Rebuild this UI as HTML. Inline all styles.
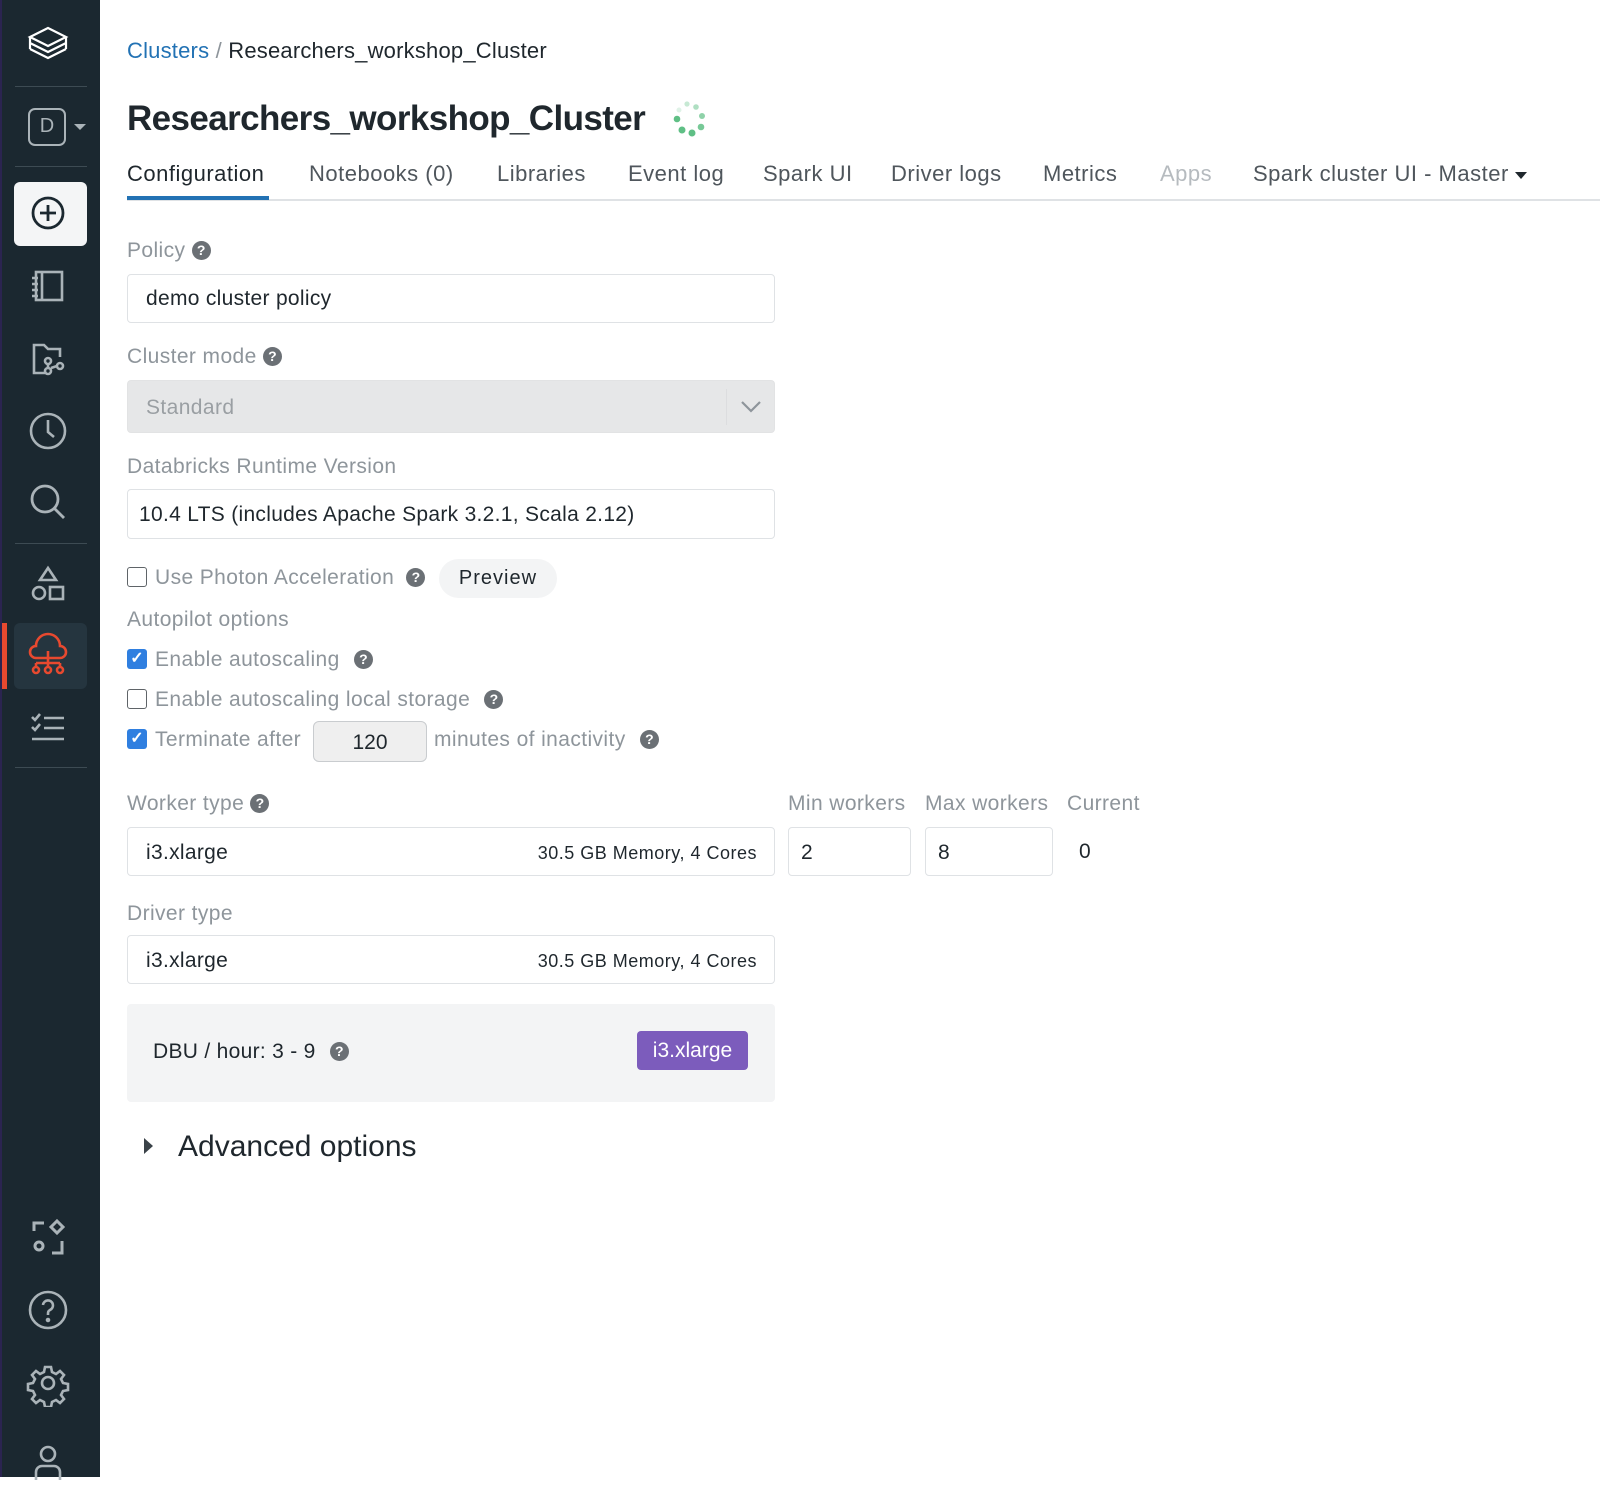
<!DOCTYPE html>
<html><head><meta charset="utf-8"><style>
*{box-sizing:border-box;margin:0;padding:0}
body{width:1600px;height:1477px;background:#fff;font-family:"Liberation Sans",sans-serif;position:relative;overflow:hidden;color:#1f272d}
.sb{position:absolute;left:0;top:0;width:100px;height:1477px;background:#1b2830}
.sb .edge{position:absolute;left:0;top:0;width:2px;height:1477px;background:#2b2450}
.sep{position:absolute;left:15px;width:72px;height:1px;background:#3d4b53}
.ic{position:absolute;left:24px;width:48px;height:48px}
.a{position:absolute;white-space:nowrap}
.lbl{color:#8e959b;font-size:21px;letter-spacing:.4px}
.inp{position:absolute;border:1px solid #dfe2e5;border-radius:4px;background:#fff}
.q{display:inline-block;width:19px;height:19px;border-radius:50%;background:#6b7075;color:#fff;font-size:14px;font-weight:bold;text-align:center;line-height:19px;vertical-align:2px;letter-spacing:0}
.cb{position:absolute;width:20px;height:20px;border:1.5px solid #5f6468;border-radius:3px;background:#fff}
.cbk{position:absolute;width:20px;height:20px;border-radius:3px;background:#2f7fe0;color:#fff;font-size:16px;text-align:center;line-height:20px;font-weight:bold}
.tab{position:absolute;top:161px;font-size:22px;color:#4f565c;letter-spacing:.5px}
</style></head><body>
<div class="sb"><div class="edge"></div>
<svg class="ic" style="top:21px" viewBox="0 0 48 48" fill="none" stroke="#fff" stroke-width="2.2"><path d="M6 16l18-9 18 9-18 9z"/><path d="M6 22l18 9 18-9M6 28l18 9 18-9M6 16v12M42 16v12"/></svg>
<div class="sep" style="top:86px"></div>
<div class="a" style="left:28px;top:108px;width:38px;height:38px;border:2.5px solid #aab3b8;border-radius:7px;color:#aab3b8;font-size:20px;text-align:center;line-height:33px">D</div>
<div class="a" style="left:74px;top:124px;border-left:6px solid transparent;border-right:6px solid transparent;border-top:6px solid #aab3b8"></div>
<div class="sep" style="top:166px"></div>
<div class="a" style="left:14px;top:182px;width:73px;height:64px;background:#f4f5f6;border-radius:6px"></div>
<svg class="ic" style="top:189px" viewBox="0 0 48 48" fill="none" stroke="#1b2830" stroke-width="2.8"><circle cx="24" cy="24" r="15"/><path d="M24 16v16M16 24h16"/></svg>
<svg class="ic" style="top:262px" viewBox="0 0 48 48" fill="none" stroke="#aab3b8" stroke-width="2.6"><rect x="12" y="10" width="26" height="28"/><path d="M18 10v28M8 16h6M8 22h6M8 28h6M8 34h6"/></svg>
<svg class="ic" style="top:335px" viewBox="0 0 48 48" fill="none" stroke="#aab3b8" stroke-width="2.6"><path d="M22 38H10V10h10l4 4h12v8"/><circle cx="24" cy="26" r="3"/><circle cx="24" cy="36" r="3"/><circle cx="36" cy="31" r="3"/><path d="M24 29v4M27 33l6-2"/></svg>
<svg class="ic" style="top:407px" viewBox="0 0 48 48" fill="none" stroke="#aab3b8" stroke-width="2.6"><circle cx="24" cy="24" r="17"/><path d="M24 13v12l6 5"/></svg>
<svg class="ic" style="top:478px" viewBox="0 0 48 48" fill="none" stroke="#aab3b8" stroke-width="2.8"><circle cx="21" cy="21" r="13"/><path d="M30 30l10 10"/></svg>
<div class="sep" style="top:543px"></div>
<svg class="ic" style="top:560px" viewBox="0 0 48 48" fill="none" stroke="#aab3b8" stroke-width="2.6"><path d="M24 8l8 12H16z"/><circle cx="15" cy="33" r="6"/><rect x="26" y="27" width="13" height="12"/></svg>
<div class="a" style="left:2px;top:623px;width:5px;height:66px;background:#e8492f"></div>
<div class="a" style="left:14px;top:623px;width:73px;height:66px;background:#25353f;border-radius:6px"></div>
<svg class="ic" style="top:631px" viewBox="0 0 48 48" fill="none" stroke="#e8492f" stroke-width="2.6"><path d="M12 27a6 6 0 010-12 10 10 0 0124 0 6 6 0 010 12z"/><path d="M24 20v12M12 32h24M12 32v5M36 32v5M24 32v5"/><circle cx="12" cy="39" r="3"/><circle cx="24" cy="39" r="3"/><circle cx="36" cy="39" r="3"/></svg>
<svg class="ic" style="top:703px" viewBox="0 0 48 48" fill="none" stroke="#aab3b8" stroke-width="2.6"><path d="M8 14l3 3 5-6M8 24l3 3 5-6M20 15h20M20 25h20M8 36h32"/></svg>
<div class="sep" style="top:767px"></div>
<svg class="ic" style="top:1213px" viewBox="0 0 48 48" fill="none" stroke="#aab3b8" stroke-width="3"><path d="M20 10H10v8"/><path d="M33 8l6 6-6 6-6-6z"/><circle cx="15" cy="33" r="4"/><path d="M38 28v12H28"/></svg>
<svg class="ic" style="top:1286px" viewBox="0 0 48 48" fill="none" stroke="#aab3b8" stroke-width="2.6"><circle cx="24" cy="24" r="18"/><path d="M19 19a5 5 0 1 1 7 5c-2 1-2 2-2 5"/><circle cx="24" cy="34" r="1" fill="#aab3b8"/></svg>
<svg class="ic" style="top:1359px" viewBox="0 0 48 48" fill="none" stroke="#aab3b8" stroke-width="2.6"><circle cx="24" cy="24" r="6"/><path d="M21 8h6l1 5 4 2 4-3 4 4-3 4 2 4 5 1v6l-5 1-2 4 3 4-4 4-4-3-4 2-1 5h-6l-1-5-4-2-4 3-4-4 3-4-2-4-5-1v-6l5-1 2-4-3-4 4-4 4 3 4-2z"/></svg>
<svg class="ic" style="top:1440px" viewBox="0 0 48 48" fill="none" stroke="#aab3b8" stroke-width="2.6"><circle cx="24" cy="14" r="7"/><path d="M12 40v-8a6 6 0 016-6h12a6 6 0 016 6v8"/></svg>
</div>

<div class="a" style="left:127px;top:38px;font-size:22px;letter-spacing:.2px"><span style="color:#2272b4">Clusters</span> <span style="color:#8e959b">/</span> Researchers_workshop_Cluster</div>
<div class="a" style="left:127px;top:99px;font-size:35px;font-weight:bold;color:#1f272d;letter-spacing:-.6px">Researchers_workshop_Cluster</div>
<svg class="a" style="left:668px;top:98px" width="44" height="44" viewBox="0 0 44 44"><g fill="#5fbf85"><circle cx="9" cy="21" r="3.3"/><circle cx="14" cy="32" r="3.5"/><circle cx="24" cy="35" r="3.5"/><circle cx="33" cy="29" r="3.3" opacity=".85"/><circle cx="34" cy="18" r="3" opacity=".7"/><circle cx="28" cy="9" r="2.8" opacity=".5"/><circle cx="19" cy="6" r="2.6" opacity=".35"/><circle cx="11" cy="12" r="2.5" opacity=".2"/></g></svg>

<div class="tab" style="left:127px;color:#1f272d">Configuration</div>
<div class="tab" style="left:309px">Notebooks (0)</div>
<div class="tab" style="left:497px">Libraries</div>
<div class="tab" style="left:628px">Event log</div>
<div class="tab" style="left:763px">Spark UI</div>
<div class="tab" style="left:891px">Driver logs</div>
<div class="tab" style="left:1043px">Metrics</div>
<div class="tab" style="left:1160px;color:#b6bbbf">Apps</div>
<div class="tab" style="left:1253px">Spark cluster UI - Master <span style="display:inline-block;border-left:6px solid transparent;border-right:6px solid transparent;border-top:7px solid #1f272d;vertical-align:2px"></span></div>
<div class="a" style="left:127px;top:199px;width:1473px;height:2px;background:#dfe2e5"></div>
<div class="a" style="left:127px;top:196px;width:142px;height:4px;background:#2272b4"></div>

<div class="a lbl" style="left:127px;top:239px">Policy <span class="q">?</span></div>
<div class="inp" style="left:127px;top:274px;width:648px;height:49px"><span class="a" style="left:18px;top:12px;font-size:21px;letter-spacing:.3px">demo cluster policy</span></div>
<div class="a lbl" style="left:127px;top:345px">Cluster mode <span class="q">?</span></div>
<div class="inp" style="left:127px;top:380px;width:648px;height:53px;background:#e6e7e8;border-color:#e2e3e4"><span class="a lbl" style="left:18px;top:15px;color:#9a9fa3">Standard</span><div class="a" style="left:598px;top:8px;width:1px;height:36px;background:#dcdddf"></div><svg class="a" style="left:612px;top:18px" width="22" height="16"><path d="M2 3l9 9 9-9" fill="none" stroke="#8e959b" stroke-width="2.2"/></svg></div>
<div class="a lbl" style="left:127px;top:455px">Databricks Runtime Version</div>
<div class="inp" style="left:127px;top:489px;width:648px;height:50px"><span class="a" style="left:11px;top:13px;font-size:21px;letter-spacing:.3px">10.4 LTS (includes Apache Spark 3.2.1, Scala 2.12)</span></div>

<div class="cb" style="left:127px;top:567px"></div>
<div class="a lbl" style="left:155px;top:566px">Use Photon Acceleration <span class="q" style="margin-left:6px">?</span></div>
<div class="a" style="left:439px;top:559px;width:118px;height:39px;border-radius:20px;background:#f3f4f5;font-size:20px;text-align:center;line-height:39px;letter-spacing:1px">Preview</div>
<div class="a lbl" style="left:127px;top:608px">Autopilot options</div>
<div class="cbk" style="left:127px;top:649px">✓</div>
<div class="a lbl" style="left:155px;top:648px">Enable autoscaling <span class="q" style="margin-left:8px">?</span></div>
<div class="cb" style="left:127px;top:689px"></div>
<div class="a lbl" style="left:155px;top:688px">Enable autoscaling local storage <span class="q" style="margin-left:8px">?</span></div>
<div class="cbk" style="left:127px;top:729px">✓</div>
<div class="a lbl" style="left:155px;top:728px">Terminate after</div>
<div class="inp" style="left:313px;top:721px;width:114px;height:41px;background:#efefef;border-color:#c9cccf;border-radius:6px;font-size:21px;text-align:center;line-height:41px">120</div>
<div class="a lbl" style="left:434px;top:728px">minutes of inactivity <span class="q" style="margin-left:8px">?</span></div>

<div class="a lbl" style="left:127px;top:792px">Worker type <span class="q">?</span></div>
<div class="a lbl" style="left:788px;top:792px">Min workers</div>
<div class="a lbl" style="left:925px;top:792px">Max workers</div>
<div class="a lbl" style="left:1067px;top:792px">Current</div>
<div class="inp" style="left:127px;top:827px;width:648px;height:49px"><span class="a" style="left:18px;top:13px;font-size:21px;letter-spacing:.3px">i3.xlarge</span><span class="a" style="right:17px;top:15px;font-size:18px;letter-spacing:.5px">30.5 GB Memory, 4 Cores</span></div>
<div class="inp" style="left:788px;top:827px;width:123px;height:49px"><span class="a" style="left:12px;top:13px;font-size:21px">2</span></div>
<div class="inp" style="left:925px;top:827px;width:128px;height:49px"><span class="a" style="left:12px;top:13px;font-size:21px">8</span></div>
<div class="a" style="left:1079px;top:840px;font-size:21px">0</div>
<div class="a lbl" style="left:127px;top:902px">Driver type</div>
<div class="inp" style="left:127px;top:935px;width:648px;height:49px"><span class="a" style="left:18px;top:13px;font-size:21px;letter-spacing:.3px">i3.xlarge</span><span class="a" style="right:17px;top:15px;font-size:18px;letter-spacing:.5px">30.5 GB Memory, 4 Cores</span></div>

<div class="a" style="left:127px;top:1004px;width:648px;height:98px;background:#f3f4f5;border-radius:4px"></div>
<div class="a" style="left:153px;top:1040px;font-size:21px;letter-spacing:.3px">DBU / hour: 3 - 9 <span class="q" style="margin-left:8px">?</span></div>
<div class="a" style="left:637px;top:1031px;width:111px;height:39px;background:#7c5cbc;border-radius:4px;color:#fff;font-size:21px;text-align:center;line-height:39px">i3.xlarge</div>

<div class="a" style="left:144px;top:1138px;border-top:8px solid transparent;border-bottom:8px solid transparent;border-left:9px solid #3a4248"></div>
<div class="a" style="left:178px;top:1130px;font-size:30px">Advanced options</div>
</body></html>
